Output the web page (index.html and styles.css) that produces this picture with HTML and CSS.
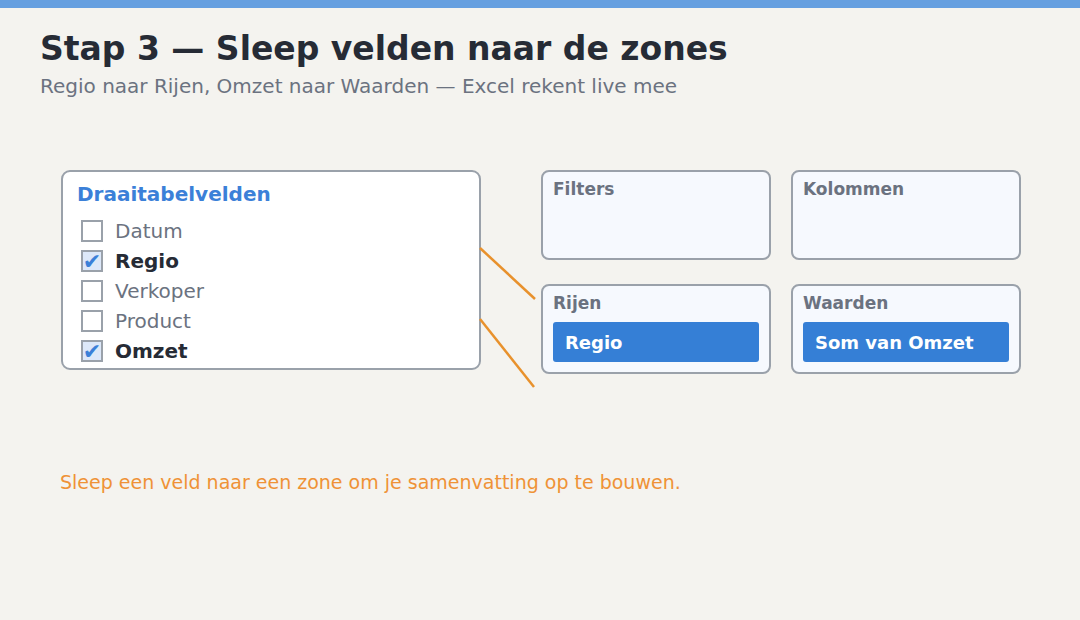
FILE: index.html
```html
<!DOCTYPE html>
<html lang="nl">
<head>
<meta charset="utf-8">
<title>Stap 3 — Sleep velden naar de zones</title>
<link rel="stylesheet" href="styles.css">
</head>
<body>
<div class="topbar"></div>
<header class="intro">
  <h1 class="title">Stap 3 — Sleep velden naar de zones</h1>
  <p class="subtitle">Regio naar Rijen, Omzet naar Waarden — Excel rekent live mee</p>
</header>

<main class="workspace">
  <section class="fields">
    <h2 class="fields-title">Draaitabelvelden</h2>
    <ul class="field-list">
      <li class="field"><span class="box"></span><span class="field-name">Datum</span></li>
      <li class="field checked"><span class="box">✔</span><span class="field-name">Regio</span></li>
      <li class="field"><span class="box"></span><span class="field-name">Verkoper</span></li>
      <li class="field"><span class="box"></span><span class="field-name">Product</span></li>
      <li class="field checked"><span class="box">✔</span><span class="field-name">Omzet</span></li>
    </ul>
  </section>

  <section class="zones">
    <div class="zone"><div class="zone-label">Filters</div></div>
    <div class="zone"><div class="zone-label">Kolommen</div></div>
    <div class="zone"><div class="zone-label">Rijen</div><div class="chip">Regio</div></div>
    <div class="zone"><div class="zone-label">Waarden</div><div class="chip">Som van Omzet</div></div>
  </section>

  <!-- drag connectors from the checked fields into their zones -->
  <svg class="connectors" width="480" height="230" viewBox="0 0 480 230" aria-hidden="true">
    <line x1="419" y1="78" x2="474" y2="129"/>
    <line x1="419" y1="149" x2="473" y2="217"/>
  </svg>
</main>

<p class="hint">Sleep een veld naar een zone om je samenvatting op te bouwen.</p>
</body>
</html>
```
FILE: styles.css
```css
* { box-sizing: border-box; }

body {
  margin: 0;
  background: #f4f3ef;
  font-family: "DejaVu Sans", "Liberation Sans", sans-serif;
  color: #262b35;
}

.topbar {
  height: 8px;
  background: #659fe0;
}

.intro {
  padding: 21px 40px 0;
}

.title {
  margin: 0;
  font-size: 33px;
  line-height: 40px;
  font-weight: bold;
  color: #262b35;
}

.subtitle {
  margin: 5px 0 0;
  font-size: 20px;
  line-height: 24px;
  color: #6b7280;
}

.workspace {
  position: relative;
  display: flex;
  gap: 60px;
  margin: 72px 0 0 61px;
}

.fields {
  width: 420px;
  height: 200px;
  background: #ffffff;
  border: 2px solid #9aa1aa;
  border-radius: 9px;
  padding: 10px 0 0 14px;
}

.fields-title {
  margin: 0;
  font-size: 20px;
  line-height: 24px;
  font-weight: bold;
  color: #3b80d8;
}

.field-list {
  list-style: none;
  margin: 10px 0 0;
  padding: 0 0 0 4px;
}

.field {
  display: flex;
  align-items: center;
  height: 30px;
  font-size: 20px;
  color: #6b7280;
}

.box {
  width: 22px;
  height: 22px;
  border: 2px solid #9aa1aa;
  background: #ffffff;
  margin-right: 12px;
  display: flex;
  align-items: center;
  justify-content: center;
  font-size: 22px;
  line-height: 1;
  padding-top: 2px;
  color: #3b80d8;
}

.checked .box {
  background: #dde8f9;
}

.checked .field-name {
  font-weight: bold;
  color: #262b35;
}

.zones {
  display: grid;
  grid-template-columns: 230px 230px;
  grid-auto-rows: 90px;
  column-gap: 20px;
  row-gap: 24px;
}

.zone {
  background: #f6f9fe;
  border: 2px solid #9aa1aa;
  border-radius: 8px;
  padding: 7px 10px 0;
}

.zone-label {
  font-size: 17px;
  line-height: 20px;
  font-weight: bold;
  color: #6b7280;
}

.chip {
  margin-top: 9px;
  height: 40px;
  background: #357fd6;
  border-radius: 3px;
  padding-left: 12px;
  display: flex;
  align-items: center;
  font-size: 18px;
  font-weight: bold;
  color: #ffffff;
}

.connectors {
  position: absolute;
  left: 0;
  top: 0;
  pointer-events: none;
}

.connectors line {
  stroke: #e8912c;
  stroke-width: 2.5;
}

.hint {
  margin: 96px 0 0 60px;
  font-size: 19px;
  line-height: 24px;
  color: #ef9236;
}
```
